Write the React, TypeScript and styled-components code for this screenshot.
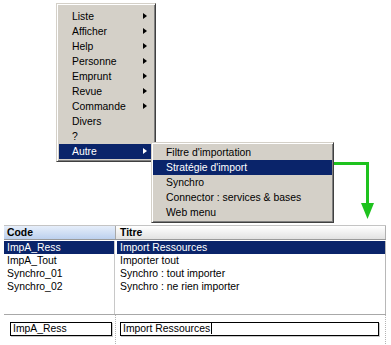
import React from "react";
import styled, { createGlobalStyle } from "styled-components";

const Global = createGlobalStyle`
  html, body { margin: 0; padding: 0; background: #ffffff; }
  body { font-family: "Liberation Sans", Arial, sans-serif; font-size: 10.4px; color: #000; }
`;

const Page = styled.div`
  position: relative;
  width: 391px;
  height: 345px;
  overflow: hidden;
  background: #ffffff;
`;

const Stage = styled.div`
  position: relative;
  height: 225px;
`;

const Menu = styled.div<{ $left: number; $top: number; $width: number; $pad: string }>`
  position: absolute;
  left: ${(p) => p.$left}px;
  top: ${(p) => p.$top}px;
  width: ${(p) => p.$width}px;
  box-sizing: border-box;
  background: #d4d0c8;
  border: 1px solid;
  border-color: #d4d0c8 #404040 #404040 #d4d0c8;
  box-shadow: inset 1px 1px 0 #ffffff, inset -1px -1px 0 #808080;
  padding: ${(p) => p.$pad};
  display: flex;
  flex-direction: column;
  z-index: 2;
`;

const Item = styled.div<{ $active?: boolean }>`
  position: relative;
  height: 15px;
  line-height: 15px;
  padding-left: 13px;
  white-space: nowrap;
  background: ${(p) => (p.$active ? "#0a246a" : "transparent")};
  color: ${(p) => (p.$active ? "#ffffff" : "#000000")};
`;

const Arrow = styled.span<{ $active?: boolean }>`
  position: absolute;
  right: 6px;
  top: 4px;
  width: 0;
  height: 0;
  border-left: 4px solid ${(p) => (p.$active ? "#ffffff" : "#000000")};
  border-top: 3.5px solid transparent;
  border-bottom: 3.5px solid transparent;
`;

const Pointer = styled.svg`
  position: absolute;
  left: 328px;
  top: 158px;
  z-index: 1;
`;

const Table = styled.div`
  margin-left: 4px;
  width: 382px;
`;

const Header = styled.div`
  display: grid;
  grid-template-columns: 112px 1fr;
  height: 13px;
  border-top: 1px solid #c4c4c4;
  border-bottom: 1px solid #9a9a9a;
`;

const HeadCell = styled.div<{ $sorted?: boolean; $first?: boolean }>`
  font-weight: bold;
  line-height: 13px;
  padding-left: ${(p) => (p.$first ? 3 : 4)}px;
  background: ${(p) =>
    p.$sorted
      ? "linear-gradient(#e6eefa, #bcd0ee)"
      : "linear-gradient(#ffffff, #e2e2e2)"};
  border-right: 1px solid ${(p) => (p.$first ? "#a8a8a8" : "#b0b0b0")};
  box-shadow: ${(p) => (p.$first ? "1px 0 0 #ffffff" : "none")};
`;

const Body = styled.div`
  display: grid;
  grid-template-columns: 112px 1fr;
  height: 73px;
  padding-top: 1px;
`;

const Column = styled.div<{ $first?: boolean }>`
  display: flex;
  flex-direction: column;
  border-right: 1px solid ${(p) => (p.$first ? "#c8c8c8" : "#b8b8b8")};
  padding-left: ${(p) => (p.$first ? 0 : 1)}px;
  margin-right: ${(p) => (p.$first ? 1 : 0)}px;
`;

const Row = styled.div<{ $selected?: boolean }>`
  height: 13px;
  line-height: 13px;
  padding-left: 3px;
  white-space: nowrap;
  background: ${(p) => (p.$selected ? "#0a246a" : "transparent")};
  color: ${(p) => (p.$selected ? "#ffffff" : "#000000")};
`;

const Footer = styled.div`
  display: grid;
  grid-template-columns: 112px 1fr;
  height: 31px;
  border-top: 1px solid #a8a8a8;
`;

const FooterCell = styled.div<{ $first?: boolean }>`
  padding-top: 7px;
  padding-left: ${(p) => (p.$first ? 6 : 4)}px;
  border-right: 1px dotted #b4b4b4;
`;

const Field = styled.div<{ $width: number }>`
  box-sizing: border-box;
  width: ${(p) => p.$width}px;
  height: 14px;
  line-height: 12px;
  border: 1px solid #000000;
  box-shadow: 1px 1px 0 #c8c8c8;
  padding-left: 2px;
  white-space: nowrap;
  background: #ffffff;
`;

const Caret = styled.span`
  display: inline-block;
  width: 1px;
  height: 11px;
  background: #000;
  vertical-align: -2px;
  margin-left: 1px;
`;

const mainItems = [
  { label: "Liste", sub: true },
  { label: "Afficher", sub: true },
  { label: "Help", sub: true },
  { label: "Personne", sub: true },
  { label: "Emprunt", sub: true },
  { label: "Revue", sub: true },
  { label: "Commande", sub: true },
  { label: "Divers", sub: false },
  { label: "?", sub: false },
  { label: "Autre", sub: true, active: true },
];

const subItems = [
  { label: "Filtre d'importation" },
  { label: "Stratégie d'import", active: true },
  { label: "Synchro" },
  { label: "Connector : services & bases" },
  { label: "Web menu" },
];

const rows = [
  { code: "ImpA_Ress", titre: "Import Ressources", selected: true },
  { code: "ImpA_Tout", titre: "Importer tout" },
  { code: "Synchro_01", titre: "Synchro : tout importer" },
  { code: "Synchro_02", titre: "Synchro : ne rien importer" },
];

export default function App() {
  return (
    <Page>
      <Global />
      <Stage>
        <Menu $left={56} $top={3} $width={100} $pad="5px 2px 2px 2px">
          {mainItems.map((it) => (
            <Item key={it.label} $active={it.active}>
              {it.label}
              {it.sub && <Arrow $active={it.active} />}
            </Item>
          ))}
        </Menu>
        <Menu $left={151} $top={142} $width={183} $pad="2px 1px 2px 1px">
          {subItems.map((it) => (
            <Item key={it.label} $active={it.active}>
              {it.label}
            </Item>
          ))}
        </Menu>
        <Pointer width="50" height="64" viewBox="0 0 50 64">
          <path d="M2 5.5 H39.5 V46" stroke="#1ec21e" strokeWidth="3" fill="none" />
          <polygon points="33,45 46,45 39.5,61" fill="#1ec21e" />
        </Pointer>
      </Stage>
      <Table>
        <Header>
          <HeadCell $sorted $first>Code</HeadCell>
          <HeadCell>Titre</HeadCell>
        </Header>
        <Body>
          <Column $first>
            {rows.map((r) => (
              <Row key={r.code} $selected={r.selected}>{r.code}</Row>
            ))}
          </Column>
          <Column>
            {rows.map((r) => (
              <Row key={r.code} $selected={r.selected}>{r.titre}</Row>
            ))}
          </Column>
        </Body>
        <Footer>
          <FooterCell $first>
            <Field $width={102}>ImpA_Ress</Field>
          </FooterCell>
          <FooterCell>
            <Field $width={259}>
              Import Ressources<Caret />
            </Field>
          </FooterCell>
        </Footer>
      </Table>
    </Page>
  );
}
